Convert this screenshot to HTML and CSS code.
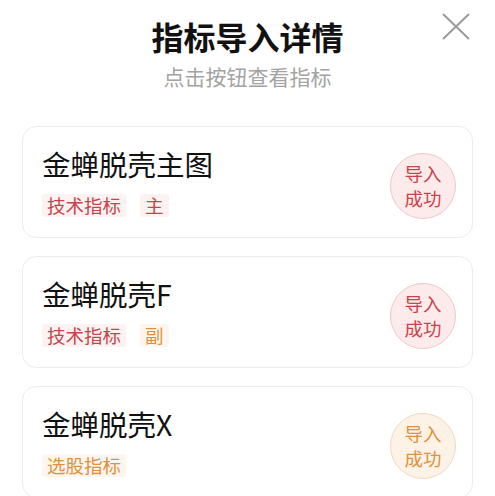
FILE: index.html
```html
<!DOCTYPE html>
<html lang="zh-CN">
<head>
    <meta charset="UTF-8">
    <meta name="viewport" content="width=device-width, initial-scale=1.0">
    <title>指标导入详情</title>
    <link rel="stylesheet" href="styles.css">
</head>
<body>
    <header class="top">
        <h1>指标导入详情</h1>
        <p>点击按钮查看指标</p>
        <button class="close" aria-label="关闭">
            <svg width="28" height="28" viewBox="0 0 28 28">
                <path d="M1 2 L27 27 M27 2 L1 27" stroke="#9a9a9a" stroke-width="2" fill="none"/>
            </svg>
        </button>
    </header>

    <!-- Import result list -->
    <section class="list">
        <div class="card">
            <div class="info">
                <div class="name">金蝉脱壳主图</div>
                <div class="tags">
                    <span class="tag red">技术指标</span>
                    <span class="tag red">主</span>
                </div>
            </div>
            <div class="badge red">导入<br>成功</div>
        </div>

        <div class="card">
            <div class="info">
                <div class="name">金蝉脱壳F</div>
                <div class="tags">
                    <span class="tag red">技术指标</span>
                    <span class="tag orange">副</span>
                </div>
            </div>
            <div class="badge red">导入<br>成功</div>
        </div>

        <div class="card">
            <div class="info">
                <div class="name">金蝉脱壳X</div>
                <div class="tags">
                    <span class="tag orange">选股指标</span>
                </div>
            </div>
            <div class="badge orange">导入<br>成功</div>
        </div>
    </section>
</body>
</html>
```

FILE: styles.css
```css
body {
    font-family: "Noto Sans CJK SC", "Noto Sans", sans-serif;
    background: #fff;
    color: #111;
    margin: 0;
    padding: 0;
}

.top {
    position: relative;
    text-align: center;
    padding-top: 16px;
}

.top h1 {
    margin: 0;
    font-size: 32px;
    line-height: 41px;
    font-weight: bold;
    color: #111;
}

.top p {
    margin: 5px 0 0;
    font-size: 21px;
    line-height: 28px;
    color: #a3a3a3;
}

.close {
    position: absolute;
    top: 12px;
    right: 25px;
    padding: 0;
    border: none;
    background: none;
    cursor: pointer;
}

.list {
    padding: 36px 22px 0;
}

.card {
    display: flex;
    align-items: center;
    border: 1px solid #ececec;
    border-radius: 14px;
    padding: 19px 16px 20px 19px;
    margin-bottom: 18px;
}

.info {
    flex: 1;
}

.name {
    font-size: 28.5px;
    line-height: 36px;
}

.tags {
    display: flex;
    gap: 14px;
    margin-top: 12px;
}

.tag {
    font-size: 18.5px;
    line-height: 23px;
    padding: 0 5px;
    border-radius: 3px;
}

.tag.red {
    color: #c8434b;
    background: #fdf2f2;
}

.tag.orange {
    color: #e0913a;
    background: #fdf6ee;
}

.badge {
    width: 64px;
    height: 64px;
    transform: translateY(4px);
    border-radius: 50%;
    display: flex;
    align-items: center;
    justify-content: center;
    text-align: center;
    font-size: 18.5px;
    line-height: 25px;
}

.badge.red {
    color: #c8434b;
    background: #fdeaea;
    border: 1px solid #ebc9cb;
}

.badge.orange {
    color: #e0913a;
    background: #fdf2e6;
    border: 1px solid #efd9c2;
}
```
